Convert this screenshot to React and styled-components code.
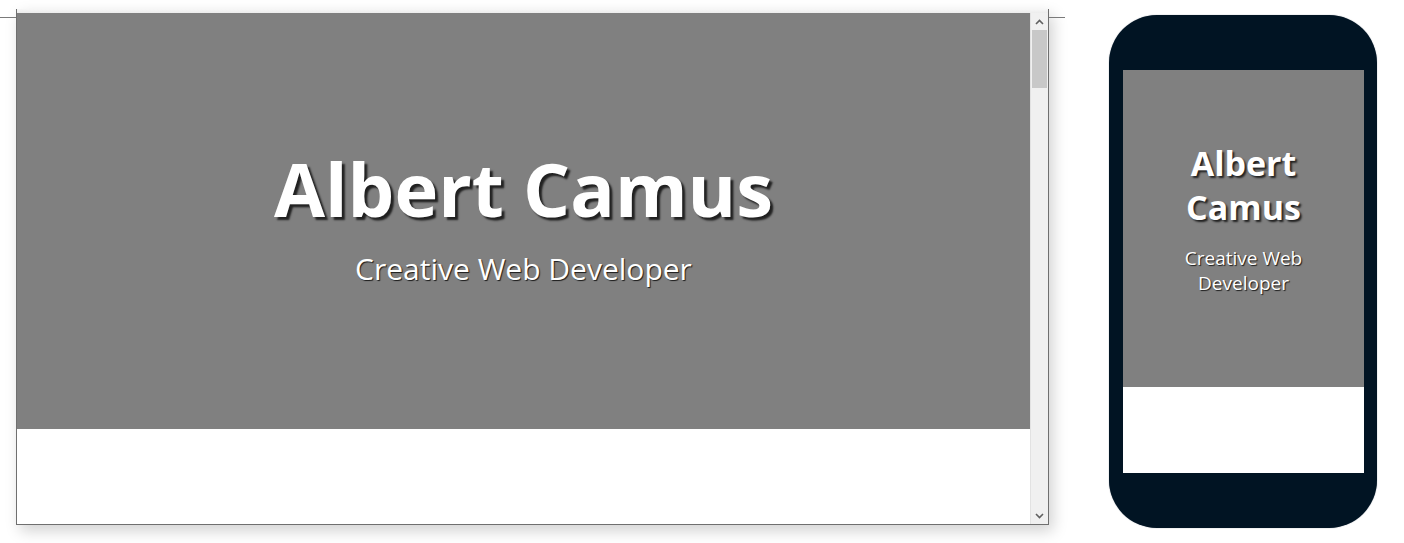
import React from "react"
import styled, { createGlobalStyle } from "styled-components"

const Global = createGlobalStyle`
    html, body {
        margin: 0;
        padding: 0;
        background: #fff;
        font-family: "Open Sans", "Noto Sans", sans-serif;
    }
`

const Stage = styled.div`
    display: flex;
    flex-direction: row;
    align-items: flex-start;
    width: 1404px;
    height: 543px;
    overflow: hidden;
    position: relative;
`

const Desktop = styled.div`
    margin: 9px 0 0 16px;
    width: 1031px;
    height: 515px;
    display: flex;
    flex-direction: column;
    border: 1px solid #6f6f6f;
    border-top: none;
    box-shadow: 4px 6px 14px rgba(0, 0, 0, 0.18);
    background: #fff;
    position: relative;

    &::before, &::after {
        content: "";
        position: absolute;
        top: 8px;
        width: 16px;
        height: 1px;
        background: #7a7a7a;
    }
    &::before { left: -17px; }
    &::after { right: -17px; }
`

const Chrome = styled.div`
    height: 4px;
    background: linear-gradient(#f7f7f7, #ececec);
    flex-shrink: 0;
`

const Body = styled.div`
    flex: 1;
    display: flex;
    flex-direction: row;
    min-height: 0;
`

const Viewport = styled.div`
    flex: 1;
    display: flex;
    flex-direction: column;
    background: #fff;
`

const Hero = styled.header`
    height: ${p => p.$h}px;
    background: #808080;
    display: flex;
    flex-direction: column;
    align-items: center;
    justify-content: center;
    text-align: center;
    color: #fff;
    padding: 0 ${p => p.$side || 0}px ${p => p.$bottom || 0}px;
    box-sizing: border-box;
    flex-shrink: 0;
`

const Name = styled.h1`
    margin: 0;
    font-weight: 700;
    font-size: ${p => p.$size}px;
    line-height: ${p => p.$lh};
    text-shadow: ${p => p.$sh}px ${p => p.$sh}px 2px rgba(0, 0, 0, 0.75);
`

const Role = styled.p`
    margin: ${p => p.$gap}px 0 0;
    font-weight: 400;
    font-size: ${p => p.$size}px;
    line-height: ${p => p.$lh};
    text-shadow: 1px 1px 1px rgba(0, 0, 0, 0.8);
`

const Scrollbar = styled.div`
    width: 17px;
    background: #f0f0f0;
    border-left: 1px solid #e2e2e2;
    display: flex;
    flex-direction: column;
    align-items: center;
`

const Arrow = styled.div`
    height: 17px;
    width: 100%;
    display: flex;
    align-items: center;
    justify-content: center;
    color: #606060;
`

const Thumb = styled.div`
    width: 15px;
    height: 58px;
    background: #c8c8c8;
`

const Track = styled.div`
    flex: 1;
`

const Phone = styled.div`
    margin: 15px 0 0 60px;
    width: 268px;
    height: 513px;
    border-radius: 48px;
    background: #011423;
    padding: 55px 13px 55px 14px;
    box-sizing: border-box;
    box-shadow: 0 0 1px rgba(0, 20, 40, 0.6);
`

const Screen = styled.div`
    height: 100%;
    background: #fff;
    display: flex;
    flex-direction: column;
`

const Chevron = ({ up }) => (
    <svg width="9" height="6" viewBox="0 0 9 6">
        <path d={up ? "M1 5 L4.5 1.5 L8 5" : "M1 1 L4.5 4.5 L8 1"} fill="none" stroke="currentColor" strokeWidth="1.6" />
    </svg>
)

const App = () => {
    return (
        <Stage>
            <Global />
            <Desktop>
                <Chrome />
                <Body>
                    <Viewport>
                        <Hero $h={416} $bottom={7}>
                            <Name $size={74} $lh="81px" $sh={3}>Albert Camus</Name>
                            <Role $size={30} $lh="36px" $gap={22}>Creative Web Developer</Role>
                        </Hero>
                    </Viewport>
                    <Scrollbar>
                        <Arrow><Chevron up /></Arrow>
                        <Thumb />
                        <Track />
                        <Arrow><Chevron /></Arrow>
                    </Scrollbar>
                </Body>
            </Desktop>
            <Phone>
                <Screen>
                    <Hero $h={317} $side={40} $bottom={20}>
                        <Name $size={34} $lh="44px" $sh={2}>Albert Camus</Name>
                        <Role $size={19} $lh="25px" $gap={17}>Creative Web Developer</Role>
                    </Hero>
                </Screen>
            </Phone>
        </Stage>
    )
}

export default App
